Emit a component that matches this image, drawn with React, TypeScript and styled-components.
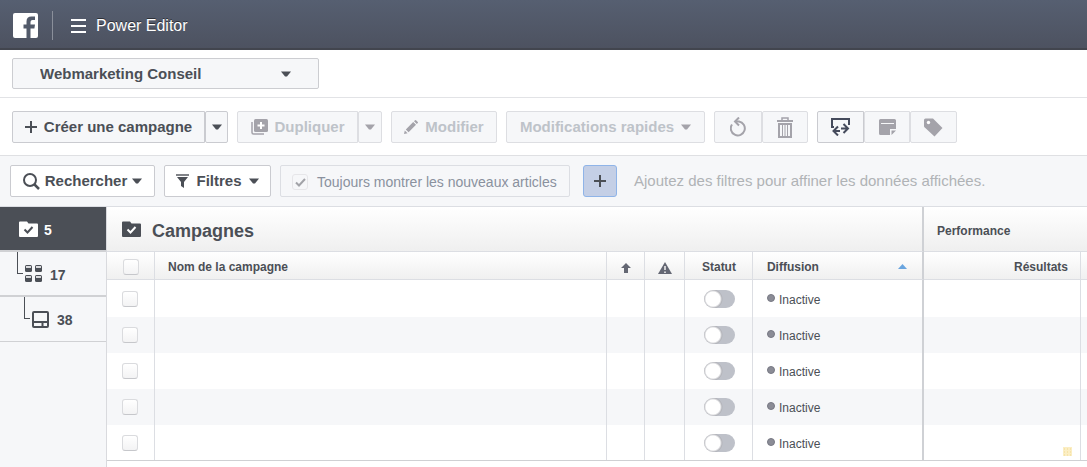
import React from 'react';
import styled, { createGlobalStyle } from 'styled-components';

const ink = '#4b4f56';
const line = '#dcdee3';
const wash = '#f6f7f9';
const muted = '#a4a3aa';

const GlobalStyle = createGlobalStyle`
  *, *::before, *::after { box-sizing: border-box; }
  body { margin: 0; background: #fff; }
  body, button, select, input { font-family: "Liberation Sans", Arial, sans-serif; color: ${ink}; }
  svg { display: block; flex: none; }
`;

const Page = styled.div`
  display: flex;
  flex-direction: column;
  min-height: 100vh;
`;

const TopBar = styled.header`
  display: flex;
  align-items: center;
  height: 50px;
  padding: 2px 13px 0;
  background: linear-gradient(#565f71, #4d5260);
  border-bottom: 2px solid #42454e;
`;

const HomeLink = styled.a`
  display: flex;
`;

const BarDivider = styled.span`
  width: 1px;
  height: 29px;
  margin: 0 18px 0 14px;
  background: #8a8f9a;
`;

const MenuButton = styled.button`
  display: flex;
  align-items: center;
  gap: 10px;
  padding: 2px 0 0;
  border: 0;
  background: none;
  color: #fff;
  font-size: 16px;
  line-height: 20px;
  text-shadow: 0 -1px 0 #2e3138;
`;

const AccountBar = styled.div`
  padding: 8px 12px;
  border-bottom: 1px solid #e2e3e6;
`;

const AccountPicker = styled.label`
  display: grid;
  width: 307px;
  align-items: center;
  > * { grid-area: 1 / 1; }
  > svg { justify-self: end; margin-right: 28px; pointer-events: none; }
`;

const AccountSelect = styled.select`
  appearance: none;
  width: 100%;
  height: 31px;
  padding: 0 48px 0 27px;
  border: 1px solid #cccdd1;
  border-radius: 2px;
  background: ${wash};
  font-size: 15px;
  font-weight: bold;
`;

const Toolbar = styled.div`
  display: flex;
  gap: 9px;
  padding: 13px 12px 12px;
  border-bottom: 1px solid #dfe0e3;
`;

const Group = styled.div`
  display: flex;
`;

const ToolButton = styled.button<{ $w?: number; $gap?: number; $muted?: boolean; $white?: boolean }>`
  display: flex;
  align-items: center;
  justify-content: center;
  gap: ${p => p.$gap ?? 7}px;
  height: 32px;
  min-width: ${p => p.$w ?? 0}px;
  padding: 0;
  border: 1px solid ${p => (p.$muted ? '#dddee2' : '#cacbd0')};
  border-radius: 2px;
  background: ${p => (p.$white ? '#fff' : wash)};
  color: ${p => (p.$muted ? '#bec3c9' : ink)};
  font-size: 15px;
  font-weight: bold;
  line-height: 18px;
  white-space: nowrap;
  ${Group} > & + & {
    border-left-width: 0;
    border-top-left-radius: 0;
    border-bottom-left-radius: 0;
  }
  ${Group} > &:not(:last-child) {
    border-top-right-radius: 0;
    border-bottom-right-radius: 0;
  }
  > svg { color: ${p => (p.$muted ? muted : ink)}; }
`;

const FilterBar = styled.div`
  display: flex;
  align-items: center;
  padding: 9px 10px;
  gap: 9px;
  background: ${wash};
  border-bottom: 1px solid ${line};
`;

const AlwaysShow = styled.label`
  display: flex;
  align-items: center;
  gap: 9px;
  height: 32px;
  min-width: 290px;
  padding: 2px 9px 0 11px;
  border: 1px solid ${line};
  border-radius: 2px;
  color: #8a919e;
  font-size: 14px;
  white-space: nowrap;
`;

const TickWrap = styled.span`
  display: grid;
  place-items: center;
  color: #a2a3a8;
  > * { grid-area: 1 / 1; }
  > svg { pointer-events: none; }
`;

const Check = styled.input`
  appearance: none;
  display: block;
  width: 16px;
  height: 16px;
  margin: 0;
  border: 1px solid #dadbde;
  border-bottom-color: #c6c7cb;
  border-radius: 3px;
  background: linear-gradient(#fff, #f3f3f4);
  ${TickWrap} > & {
    border-color: #e6e6e9;
    background: ${wash};
  }
`;

const AddFilter = styled.button`
  display: flex;
  align-items: center;
  justify-content: center;
  width: 34px;
  height: 32px;
  margin: 0 8px 0 4px;
  padding: 0;
  border: 1px solid #8fb4e8;
  border-radius: 3px;
  background: #c4cfe6;
`;

const Hint = styled.span`
  color: #b0b3b6;
  font-size: 15px;
  line-height: 18px;
`;

const Body = styled.div`
  display: flex;
  flex: 1;
`;

const Sidebar = styled.nav`
  width: 107px;
  flex: none;
  background: ${wash};
  border-right: 1px solid #d9dade;
`;

const Level = styled.a<{ $active?: boolean; $indent: number }>`
  display: flex;
  align-items: center;
  height: 45px;
  padding-left: ${p => p.$indent}px;
  border-bottom: 2px solid #d0d1d4;
  background: ${p => (p.$active ? '#4b4f56' : 'transparent')};
  color: ${p => (p.$active ? '#fff' : ink)};
  font-size: 14px;
  font-weight: bold;
  text-decoration: none;
  &:last-child { border-bottom-width: 1px; }
  > svg { margin-right: ${p => (p.$active ? 6 : 8)}px; }
  > b { padding-top: 2px; }
`;

const Branch = styled.span`
  align-self: flex-start;
  width: 6px;
  height: 22px;
  margin-right: 2px;
  border: solid #4b4f56;
  border-width: 0 0 1px 1px;
`;

const Main = styled.main`
  flex: 1;
  min-width: 0;
`;

const Grid = styled.table`
  width: 100%;
  table-layout: fixed;
  border-collapse: separate;
  border-spacing: 0;
  border-bottom: 1px solid #cfd0d3;
  font-size: 12px;
  line-height: 16px;
`;

const Section = styled.th<{ $end?: boolean }>`
  height: 45px;
  padding: 3px 13px 0;
  border-bottom: 1px solid ${line};
  border-right: ${p => (p.$end ? '2px solid #cfd1d5' : '0')};
  background: linear-gradient(#fff, #efefef);
  text-align: left;
`;

const SectionTitle = styled.h1`
  display: flex;
  align-items: center;
  gap: 11px;
  margin: 0 0 0 2px;
  font-size: 18px;
  line-height: 24px;
  > svg { margin-bottom: 4px; }
`;

const Column = styled.th<{ $end?: boolean; $align?: string; $check?: boolean }>`
  height: 28px;
  padding: 2px 12px 0 ${p => (p.$check ? 16 : 13)}px;
  border-bottom: 1px solid ${line};
  border-right: ${p => (p.$end ? '2px solid #cfd1d5' : `1px solid ${line}`)};
  background: linear-gradient(#fff, #f0f0f0);
  text-align: ${p => p.$align ?? 'left'};
  white-space: nowrap;
  &:last-child { border-right: 0; padding: 0; }
  > svg { margin: 2px auto 0; }
`;

const Sortable = styled.span`
  display: flex;
  align-items: center;
  justify-content: space-between;
  padding: 0 3px 0 1px;
`;

const Row = styled.tr`
  &:nth-child(even) { background: ${wash}; }
`;

const Cell = styled.td<{ $end?: boolean; $check?: boolean }>`
  height: 36px;
  padding: 0 12px 0 ${p => (p.$check ? 15 : 14)}px;
  border-right: ${p => (p.$end ? '2px solid #cfd1d5' : `1px solid ${line}`)};
  &:last-child { border-right: 0; padding: 0; }
  ${Row}:first-child > & { height: 37px; }
  ${Row}:last-child > & { height: 35px; }
`;

const Switch = styled.input`
  appearance: none;
  display: block;
  width: 31px;
  height: 18px;
  margin: 0 0 0 5px;
  border-radius: 9px;
  background: radial-gradient(circle at 9px 9px, #fff 7px, #b3b4ba 9px, #bec1c9 10px);
`;

const Status = styled.span`
  display: flex;
  align-items: center;
  gap: 4px;
  padding-top: 2px;
  > svg { margin-bottom: 4px; }
`;

const Swatch = styled.svg`
  margin: 18px -4px 0 auto;
`;

const Caret = () => (
  <svg width="10" height="6" viewBox="0 0 10 6"><path d="M0 .500h10L6 5.500H4z" fill="currentColor" /></svg>
);

const Plus = () => (
  <svg width="12" height="12" viewBox="0 0 12 12"><path d="M6 0v12M0 6h12" stroke="currentColor" strokeWidth="2" /></svg>
);

const Folder = ({ tick }: { tick: string }) => (
  <svg width="19" height="16" viewBox="0 0 19 16">
    <path d="M0 1.500Q0 .500 1 .500h7l1.500 2H18q1 0 1 1V15q0 1-1 1H1q-1 0-1-1z" fill="currentColor" />
    <path d="M5.500 8.500l3 3 5-5.500" fill="none" stroke={tick} strokeWidth="2" />
  </svg>
);

const AdSets = () => (
  <svg width="17" height="17" viewBox="0 0 17 17">
    {[[0, 0], [10, 0], [0, 10], [10, 10]].map(([x, y]) => (
      <g key={`${x}-${y}`} transform={`translate(${x} ${y})`}>
        <rect width="7" height="7" rx="1.500" fill="currentColor" />
        <rect x="1" y="1" width="5" height="2" fill="#d9dadd" />
      </g>
    ))}
  </svg>
);

const Ads = () => (
  <svg width="17" height="17" viewBox="0 0 17 17" fill="none" stroke="currentColor" strokeWidth="2">
    <rect x="1" y="1" width="15" height="15" rx="1" />
    <path d="M1 11h15M10.500 11v5" />
  </svg>
);

const rows = [1, 2, 3, 4, 5];

export default function App() {
  return (
    <Page>
      <GlobalStyle />
      <TopBar>
        <HomeLink href="#" aria-label="Facebook">
          <svg width="25" height="25" viewBox="0 0 25 25">
            <rect width="25" height="25" rx="2" fill="#fff" />
            <path d="M13.500 25v-9.500H10.500v-4h3V8.500q0-5 5-5h3.500v3.500h-2.500q-2 0-2 2v2.500h4.500l-.6 4h-3.900V25z" fill="#525a6a" />
          </svg>
        </HomeLink>
        <BarDivider />
        <MenuButton>
          <svg width="15" height="14" viewBox="0 0 15 14"><path d="M0 1h15M0 7h15M0 13h15" stroke="#fff" strokeWidth="2" /></svg>
          Power Editor
        </MenuButton>
      </TopBar>

      <AccountBar>
        <AccountPicker>
          <AccountSelect aria-label="Compte publicitaire">
            <option>Webmarketing Conseil</option>
          </AccountSelect>
          <Caret />
        </AccountPicker>
      </AccountBar>

      <Toolbar>
        <Group>
          <ToolButton $w={193}><Plus />Créer une campagne</ToolButton>
          <ToolButton $w={23} aria-label="Options de création"><Caret /></ToolButton>
        </Group>
        <Group>
          <ToolButton $muted $w={121}>
            <svg width="17" height="16" viewBox="0 0 17 16">
              <path d="M1 3v10.500q0 1.500 1.500 1.500H13" fill="none" stroke="currentColor" strokeWidth="1.500" />
              <rect x="3" y="0" width="14" height="13" rx="1.500" fill="currentColor" />
              <path d="M10 3v7M6.500 6.500h7" stroke="#fff" strokeWidth="2" />
            </svg>
            Dupliquer
          </ToolButton>
          <ToolButton $muted $w={24} aria-label="Options de duplication"><Caret /></ToolButton>
        </Group>
        <ToolButton $muted $w={106}>
          <svg width="14" height="14" viewBox="0 0 14 14" fill="currentColor">
            <path d="M0 14l.8-3.600 2.800 2.800zM1.800 9.400l7.400-7.400 2.800 2.800-7.400 7.400zM10 1.200l1-1q.5-.4 1 0l1.800 1.800q.4.500 0 1l-1 1z" />
          </svg>
          Modifier
        </ToolButton>
        <ToolButton $muted $w={199}>Modifications rapides<Caret /></ToolButton>
        <Group>
          <ToolButton $muted $w={48} aria-label="Annuler">
            <svg width="17" height="20" viewBox="0 0 17 20" fill="none" stroke="currentColor" strokeWidth="2">
              <path d="M2 7.500A7 7 0 1 0 9 4.500H5.500" />
              <path d="M9 .500L5 4.500 9 8.500" />
            </svg>
          </ToolButton>
          <ToolButton $muted $w={46} aria-label="Supprimer">
            <svg width="16" height="21" viewBox="0 0 16 21" fill="none" stroke="currentColor">
              <path d="M0 4h16" strokeWidth="2" />
              <path d="M5 3V1h6v2" strokeWidth="1.500" />
              <rect x="2" y="7" width="12" height="13" strokeWidth="2" />
              <path d="M5.500 7v13M8 7v13M10.500 7v13" />
            </svg>
          </ToolButton>
        </Group>
        <Group>
          <ToolButton $w={47} aria-label="Afficher les colonnes">
            <svg width="19" height="18" viewBox="0 0 19 18" fill="none" stroke="#454b5c" strokeWidth="2">
              <path d="M3 9H1V1h17v6" />
              <path d="M3 13h6M7 8.500L2.500 13 7 17.500M10 10.500h7M12.500 6l4.500 4.500-4.500 4.500" />
            </svg>
          </ToolButton>
          <ToolButton $muted $w={46} aria-label="Notes">
            <svg width="17" height="16" viewBox="0 0 17 16">
              <path d="M0 1.500Q0 0 1.500 0h14Q17 0 17 1.500V10h-6v6H1.500Q0 16 0 14.500zM12.500 16v-4.500H17z" fill="currentColor" />
              <path d="M2 4.500h13" stroke="#f6f7f9" />
            </svg>
          </ToolButton>
          <ToolButton $muted $w={47} aria-label="Étiquettes">
            <svg width="19" height="19" viewBox="0 0 19 19">
              <path d="M0 2Q0 .500 1.500.500H9L18.500 10 10.500 18.500.800 9.500Q0 9 0 8z" fill="currentColor" />
              <circle cx="4.500" cy="4.500" r="1.700" fill="#fff" />
            </svg>
          </ToolButton>
        </Group>
      </Toolbar>

      <FilterBar>
        <ToolButton $white $w={145} $gap={5}>
          <svg width="17" height="17" viewBox="0 0 17 17" fill="none" stroke="currentColor">
            <circle cx="7" cy="7" r="6" strokeWidth="2" /><path d="M11 11l5 5" strokeWidth="2.500" />
          </svg>
          Rechercher
          <Caret />
        </ToolButton>
        <ToolButton $white $w={107}>
          <svg width="13" height="14" viewBox="0 0 13 14" fill="currentColor">
            <path d="M0 0h13v2H0z" opacity=".7" />
            <path d="M1 3h11L8 8v6L5 12V8z" />
          </svg>
          Filtres
          <Caret />
        </ToolButton>
        <AlwaysShow>
          <TickWrap>
            <Check type="checkbox" defaultChecked />
            <svg width="11" height="9" viewBox="0 0 11 9"><path d="M1 4.500l3 3L10 1" fill="none" stroke="currentColor" strokeWidth="2" /></svg>
          </TickWrap>
          Toujours montrer les nouveaux articles
        </AlwaysShow>
        <AddFilter aria-label="Ajouter un filtre"><Plus /></AddFilter>
        <Hint>Ajoutez des filtres pour affiner les données affichées.</Hint>
      </FilterBar>

      <Body>
        <Sidebar>
          <Level href="#campagnes" $active $indent={19}><Folder tick="#4b4f56" /><b>5</b></Level>
          <Level href="#ensembles" $indent={17}><Branch /><AdSets /><b>17</b></Level>
          <Level href="#publicites" $indent={24}><Branch /><Ads /><b>38</b></Level>
        </Sidebar>
        <Main>
          <Grid>
            <colgroup>
              <col width="48" /><col /><col width="38" /><col width="40" />
              <col width="68" /><col width="171" /><col width="157" /><col width="6" />
            </colgroup>
            <thead>
              <tr>
                <Section colSpan={6} $end><SectionTitle><Folder tick="#fff" />Campagnes</SectionTitle></Section>
                <Section colSpan={2}>Performance</Section>
              </tr>
              <tr>
                <Column $check><Check type="checkbox" aria-label="Tout sélectionner" /></Column>
                <Column>Nom de la campagne</Column>
                <Column aria-label="Importées">
                  <svg width="10" height="10" viewBox="0 0 10 10"><path d="M5 0l5 5H7v5H3V5H0z" fill="#646773" /></svg>
                </Column>
                <Column aria-label="Erreurs">
                  <svg width="14" height="12" viewBox="0 0 14 12">
                    <path d="M7 0l7 12H0z" fill="#646773" /><path d="M7 4v4M7 9.500v1.500" stroke="#f4f4f4" strokeWidth="1.500" />
                  </svg>
                </Column>
                <Column $align="center">Statut</Column>
                <Column $end>
                  <Sortable>
                    Diffusion
                    <svg width="9" height="5" viewBox="0 0 9 5"><path d="M0 5l4.500-5L9 5z" fill="#6aa5df" /></svg>
                  </Sortable>
                </Column>
                <Column $align="right">Résultats</Column>
                <Column />
              </tr>
            </thead>
            <tbody>
              {rows.map(n => (
                <Row key={n}>
                  <Cell $check><Check type="checkbox" aria-label={`Sélectionner la campagne ${n}`} /></Cell>
                  <Cell />
                  <Cell />
                  <Cell />
                  <Cell><Switch type="checkbox" role="switch" aria-label={`Statut de la campagne ${n}`} /></Cell>
                  <Cell $end>
                    <Status>
                      <svg width="8" height="8" viewBox="0 0 8 8"><circle cx="4" cy="4" r="3.500" fill="#8b8c96" stroke="#777883" /></svg>
                      Inactive
                    </Status>
                  </Cell>
                  <Cell>
                    {n === rows.length && (
                      <Swatch width="9" height="9" viewBox="0 0 9 9">
                        <rect width="9" height="9" fill="#fbeec4" />
                        <path d="M1 2h7M1 5h7M1 8h7" stroke="#f2d98f" strokeDasharray="1 2" />
                      </Swatch>
                    )}
                  </Cell>
                  <Cell />
                </Row>
              ))}
            </tbody>
          </Grid>
        </Main>
      </Body>
    </Page>
  );
}
